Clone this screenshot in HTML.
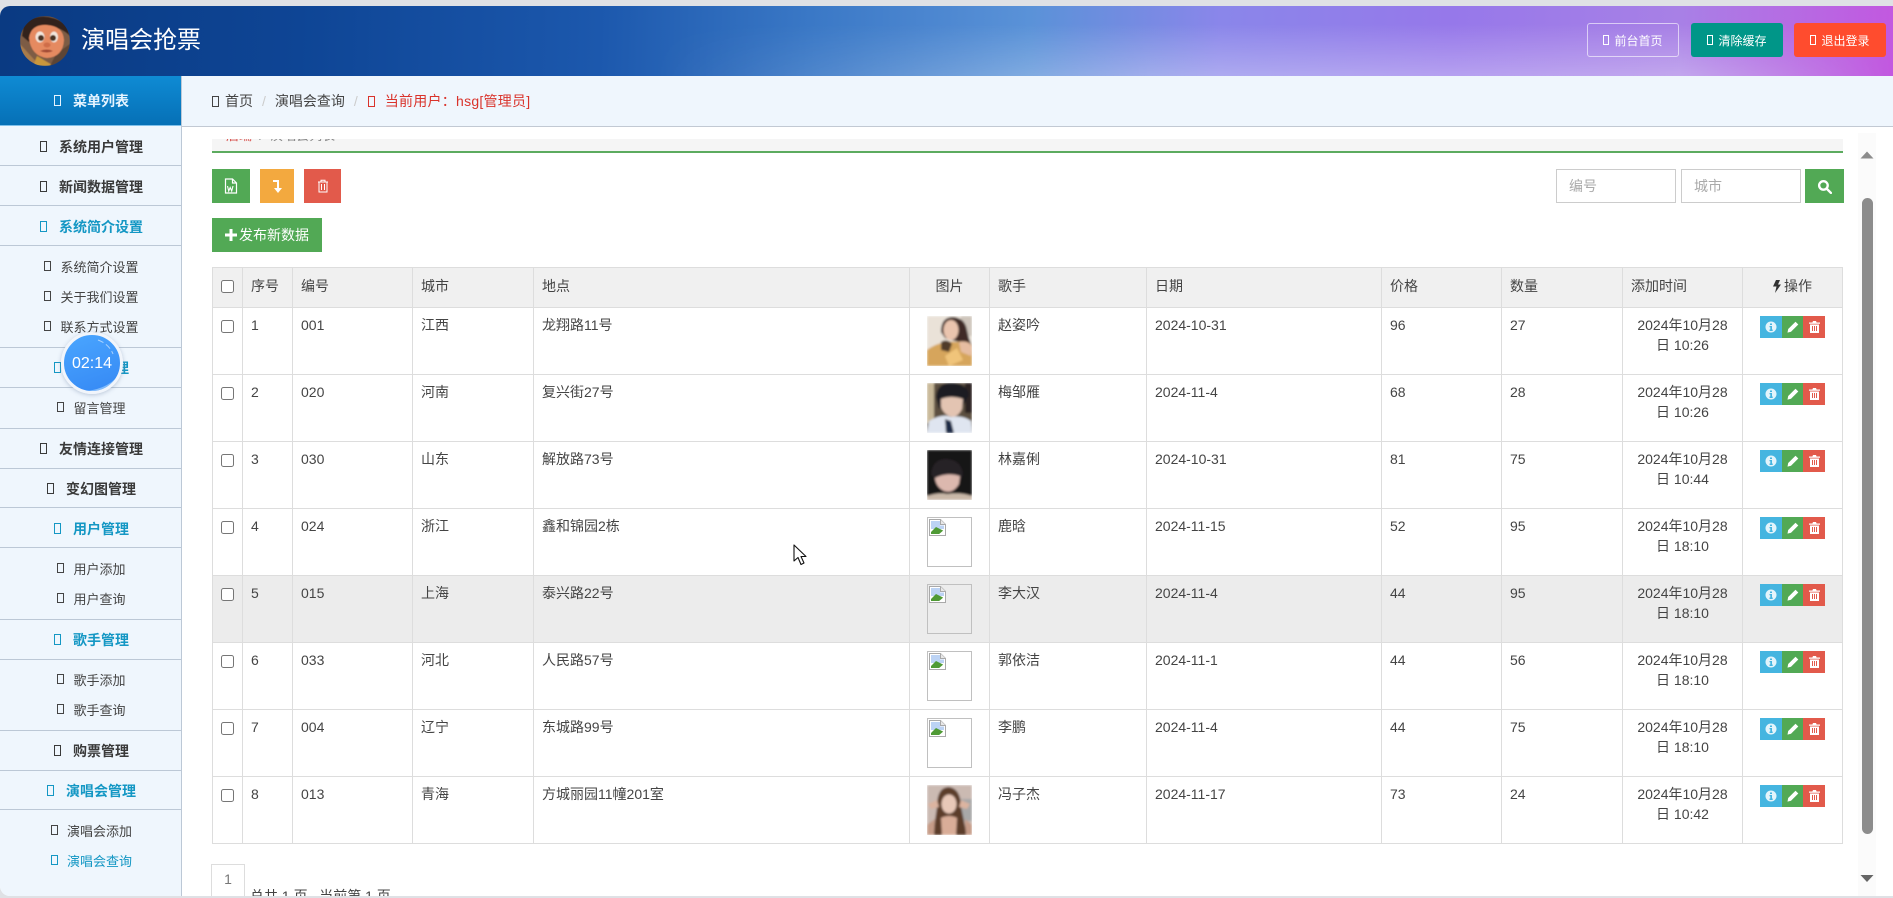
<!DOCTYPE html>
<html lang="zh">
<head>
<meta charset="utf-8">
<title>演唱会抢票</title>
<style>
*{box-sizing:border-box}
html,body{margin:0;padding:0;width:1893px;height:898px;overflow:hidden;background:#dfe1e5;font-family:"Liberation Sans","Noto Sans CJK SC",sans-serif;font-size:14px;color:#444}
.win{position:absolute;left:0;top:6px;width:1893px;height:890px;background:#fff;border-radius:10px 0 0 10px;overflow:hidden}
.hd{position:absolute;left:0;top:0;width:1893px;height:70px;background:linear-gradient(92deg,#0a3a82 0,#0e4595 300px,#1c58ad 600px,#3a78c6 810px,#5a92d8 1030px,#8a86ea 1220px,#9678ea 1450px,#a880e6 1680px,#c258e0 1893px)}
.hd:before{content:"";position:absolute;left:0;top:0;width:100%;height:100%;background:linear-gradient(180deg,rgba(255,255,255,0) 25%,rgba(255,255,255,.3) 100%);-webkit-mask-image:linear-gradient(90deg,transparent 650px,#000 1150px,#000 1680px,transparent 1893px);mask-image:linear-gradient(90deg,transparent 650px,#000 1150px,#000 1680px,transparent 1893px)}
.logo{position:absolute;left:20px;top:10px;width:50px;height:50px}
.ttl{position:absolute;left:81px;top:17px;font-size:24px;line-height:36px;color:#fff}
.tb{position:absolute;top:17px;height:34px;width:92px;border-radius:3px;color:#fff;font-size:12px;display:flex;align-items:center;justify-content:center}
.t{display:inline-block;width:7px;height:11px;border:1px solid currentColor;flex:none}
.tb .t{width:6px;height:10px;margin-right:5px}
.side{position:absolute;left:0;top:70px;width:182px;height:820px;background:#eff6fd;border-right:1px solid #bcc8d6}
.mh{position:absolute;left:0;top:0;width:181px;height:50px;background:linear-gradient(180deg,#0f8bd4,#0670b6);color:#e6f4ff;font-weight:bold;font-size:14px;display:flex;align-items:center;justify-content:center;border-bottom:1px solid #7fc0ea;padding-left:2px}
.mh .t{margin-right:12px;width:7px;height:11px}
.m,.s{position:absolute;left:0;width:181px;display:flex;align-items:center;justify-content:center;padding-left:2px}
.m{height:40px;border-bottom:1px solid #bcc8d6;font-weight:bold;font-size:14px;color:#3a3a3a;padding-top:2px}
.m.bt{border-top:1px solid #bcc8d6;height:41px;padding-top:0}
.m .t{margin-right:12px}
.s{height:30px;font-size:13px;color:#444}
.s .t{margin-right:9px;width:7px;height:10px}
.on{color:#1497c4}
.m.on{color:#1497c4}
.bar{position:absolute;left:182px;top:70px;width:1711px;height:51px;background:#eff6fd;border-bottom:1px solid #c2c9d3;display:flex;align-items:center;padding-left:30px;font-size:14px;color:#444}
.bar .t{margin-right:6px;width:7px;height:11px}
.bar i{font-style:normal;color:#ccc;margin:0 9px}
.red{color:#d9332b;display:flex;align-items:center;margin-left:1px;letter-spacing:.25px}
.red .t{margin-right:10px}
.main{position:absolute;left:182px;top:133px;width:1711px;height:757px;overflow:hidden}
.crumb{position:absolute;left:30px;top:-21px;width:1631px;height:35px;background:#f5f5f5;border-bottom:2px solid #5cab5f;padding:9px 14px;font-size:13px;line-height:18px;color:#888}
.crumb b{font-weight:normal;color:#d9534f}
.btn{position:absolute;color:#fff;display:flex;align-items:center;justify-content:center}
.g{background:#52a955}.o{background:#f3a93f}.r{background:#e25a4b}
.inp{position:absolute;top:30px;width:120px;height:34px;border:1px solid #ccc;background:#fff;padding-left:12px;line-height:32px;color:#aaa;font-size:14px}
table{position:absolute;left:30px;top:128px;width:1631px;table-layout:fixed;border-collapse:collapse;font-size:14px;color:#444}
th,td{border:1px solid #ddd;padding:8px;line-height:20px;text-align:left;vertical-align:top;font-weight:normal}
tbody td{padding-top:7px}
thead tr{height:40px;background:#f0f0f0}
tbody tr{height:67px}
tr.hv{background:#ececec}
input[type=checkbox]{display:block;width:13px;height:13px;margin:4px 0 0 0}
tbody input[type=checkbox]{margin-top:5px}
.c{text-align:center}
.pic{display:block;width:45px;height:50px;margin:1px auto 0}
.bk{width:45px;height:50px;margin:1px auto 0;border:1px solid #c0c0c0;padding:1px}
.bk svg{display:block}
.ops{display:flex;justify-content:center;margin-top:1px}
.ops span{height:22px;display:flex;align-items:center;justify-content:center}
.ib{background:#45b5e0;width:22px}.gb{background:#52a955;width:21px}.rb{background:#e25a4b;width:22px}
.pg{position:absolute;left:29px;top:725px;width:34px;height:40px;border:1px solid #ddd;background:#fff;text-align:center;line-height:28px;color:#777;font-size:14px}
.pt{position:absolute;left:68px;top:747px;font-size:14px;line-height:20px;color:#444;white-space:pre}
.sc{position:absolute;left:1858px;width:18px;background:#fbfbfb}
.th{position:absolute;left:1862px;width:11px;height:636px;border-radius:6px;background:#8c8c8c}
.timer{position:absolute;left:61px;top:332px;width:62px;height:62px;border-radius:50%;background:linear-gradient(160deg,#4aa6ff,#3588f4);border:3px solid #f1f5fb;box-shadow:0 1px 4px rgba(120,140,170,.45);color:#fff;text-align:center;line-height:58px;font-size:16px;overflow:hidden}
</style>
</head>
<body>
<div class="win">
  <div class="hd">
    <svg class="logo" viewBox="0 0 50 50">
      <defs><clipPath id="lc"><circle cx="25" cy="25" r="25"/></clipPath><filter id="lb"><feGaussianBlur stdDeviation=".5"/></filter></defs>
      <g clip-path="url(#lc)" filter="url(#lb)">
        <rect width="50" height="50" fill="#7d5c44"/>
        <path d="M0 28 L20 50 H0Z" fill="#a97c4c"/>
        <path d="M17 40 L34 50 H13Z" fill="#c9973e"/>
        <path d="M36 38L50 28V50H30Z" fill="#5d4434"/>
        <path d="M4 6 Q24 -6 46 8 L50 20 Q38 8 18 11 L9 26 L2 20Z" fill="#33231c"/>
        <path d="M9 22 Q11 8 27 9 Q43 10 44 24 Q43 41 27 42 Q11 40 9 22Z" fill="#e58a60"/>
        <ellipse cx="20" cy="21" rx="4.500" ry="5.500" fill="#f2e6dc"/>
        <ellipse cx="34" cy="21" rx="4" ry="5.500" fill="#f2e6dc"/>
        <circle cx="21" cy="22" r="3" fill="#4a3022"/>
        <circle cx="33" cy="22" r="3" fill="#4a3022"/>
        <ellipse cx="27" cy="29" rx="3.500" ry="2.500" fill="#cf6d48"/>
        <path d="M20 35 Q27 32 33 35 Q27 38 20 35Z" fill="#a04a34"/>
      </g>
    </svg>
    <div class="ttl">演唱会抢票</div>
    <div class="tb" style="left:1587px;border:1px solid rgba(255,255,255,.6)"><span class="t"></span>前台首页</div>
    <div class="tb" style="left:1691px;background:#009688"><span class="t"></span>清除缓存</div>
    <div class="tb" style="left:1794px;background:#ff4c2e"><span class="t"></span>退出登录</div>
  </div>

  <div class="side">
    <div class="mh"><span class="t"></span>菜单列表</div>
    <div class="m" style="top:50px"><span class="t"></span>系统用户管理</div>
    <div class="m" style="top:90px"><span class="t"></span>新闻数据管理</div>
    <div class="m on" style="top:130px"><span class="t"></span>系统简介设置</div>
    <div class="s" style="top:175px"><span class="t"></span>系统简介设置</div>
    <div class="s" style="top:205px"><span class="t"></span>关于我们设置</div>
    <div class="s" style="top:235px"><span class="t"></span>联系方式设置</div>
    <div class="m on bt" style="top:271px"><span class="t"></span>留言管理</div>
    <div class="s" style="top:316px"><span class="t"></span>留言管理</div>
    <div class="m bt" style="top:352px"><span class="t"></span>友情连接管理</div>
    <div class="m" style="top:392px"><span class="t"></span>变幻图管理</div>
    <div class="m on" style="top:432px"><span class="t"></span>用户管理</div>
    <div class="s" style="top:477px"><span class="t"></span>用户添加</div>
    <div class="s" style="top:507px"><span class="t"></span>用户查询</div>
    <div class="m on bt" style="top:543px"><span class="t"></span>歌手管理</div>
    <div class="s" style="top:588px"><span class="t"></span>歌手添加</div>
    <div class="s" style="top:618px"><span class="t"></span>歌手查询</div>
    <div class="m bt" style="top:654px"><span class="t"></span>购票管理</div>
    <div class="m on" style="top:694px"><span class="t"></span>演唱会管理</div>
    <div class="s" style="top:739px"><span class="t"></span>演唱会添加</div>
    <div class="s on" style="top:769px"><span class="t"></span>演唱会查询</div>
  </div>

  <div class="bar">
    <span class="t"></span>首页<i>/</i>演唱会查询<i>/</i><span class="red"><span class="t"></span>当前用户：hsg[管理员]</span>
  </div>

  <div class="main">
    <div class="crumb"><b>后端</b> &nbsp;/&nbsp; 演唱会列表</div>

    <div class="btn g" style="left:30px;top:30px;width:38px;height:34px">
      <svg width="14" height="16" viewBox="0 0 14 16" fill="none" stroke="#fff" stroke-width="1.2"><path d="M1.500 1h7l4 4v10h-11z"/><path d="M8.500 1v4h4"/><path d="M3.500 8l1.200 5 1.500-3.500 1.500 3.500 1.300-5" stroke-width="1.100"/></svg>
    </div>
    <div class="btn o" style="left:78px;top:30px;width:34px;height:34px">
      <svg width="12" height="15" viewBox="0 0 12 15" fill="#fff"><path d="M2 1h6v8h3l-4 5-4-5h3V3H2z"/></svg>
    </div>
    <div class="btn r" style="left:122px;top:30px;width:37px;height:34px">
      <svg width="12" height="14" viewBox="0 0 12 14" fill="none" stroke="#fff" stroke-width="1"><path d="M1 3h10M4 3V1.200h4V3M2 3v10h8V3M4.500 5v6M7.500 5v6"/></svg>
    </div>
    <div class="btn g" style="left:30px;top:79px;width:110px;height:34px;font-size:14px">
      <svg width="12" height="12" viewBox="0 0 12 12" fill="#fff" style="margin-right:2px"><path d="M4.500 0h3v4.500H12v3H7.500V12h-3V7.500H0v-3h4.500z"/></svg>发布新数据
    </div>

    <div class="inp" style="left:1374px">编号</div>
    <div class="inp" style="left:1499px">城市</div>
    <div class="btn g" style="left:1623px;top:30px;width:39px;height:34px">
      <svg width="15" height="15" viewBox="0 0 14 14" fill="none" stroke="#fff" stroke-width="2.200"><circle cx="6" cy="6" r="4"/><path d="M9 9l4 4" stroke-linecap="round"/></svg>
    </div>

    <table>
      <colgroup><col style="width:30px"><col style="width:50px"><col style="width:120px"><col style="width:121px"><col style="width:376px"><col style="width:80px"><col style="width:157px"><col style="width:235px"><col style="width:120px"><col style="width:121px"><col style="width:120px"><col style="width:100px"></colgroup>
      <thead>
        <tr><th><input type="checkbox"></th><th>序号</th><th>编号</th><th>城市</th><th>地点</th><th class="c">图片</th><th>歌手</th><th>日期</th><th>价格</th><th>数量</th><th>添加时间</th>
        <th class="c"><svg width="8" height="13" viewBox="0 0 8 13" fill="#333" style="vertical-align:-2px;margin-right:3px"><path d="M3 0h4L5 4.500h3L2 13l1.500-6.500H0z"/></svg>操作</th></tr>
      </thead>
      <tbody>
        <tr><td><input type="checkbox"></td><td>1</td><td>001</td><td>江西</td><td>龙翔路11号</td>
          <td><svg class="pic" viewBox="0 0 45 50"><defs><filter id="b1"><feGaussianBlur stdDeviation="1"/></filter></defs><g filter="url(#b1)"><rect width="45" height="50" fill="#eae2d8"/><rect x="34" width="11" height="20" fill="#cfc6bc"/><path d="M14 16Q14 1 26 1Q38 2 40 14Q42 24 45 30L32 26 18 22Z" fill="#3f2c28"/><ellipse cx="24" cy="14" rx="7.500" ry="10" fill="#eac4ae"/><path d="M0 50V34Q14 24 30 26Q42 24 45 30V50Z" fill="#d6a55c"/><path d="M32 26Q42 24 45 31L44 40 34 36Z" fill="#e6bda2"/><path d="M14 26Q20 22 25 28L22 36 14 34Z" fill="#4f3a2c"/><path d="M18 40L30 32 36 44 22 50Z" fill="#f0c47a"/></g></svg></td>
          <td>赵姿吟</td><td>2024-10-31</td><td>96</td><td>27</td><td class="c">2024年10月28日 10:26</td><td><div class="ops"><span class="ib"><svg width="12" height="12" viewBox="0 0 12 12"><circle cx="6" cy="6" r="5.500" fill="#fff" opacity=".85"/><path d="M5 2.500h2v1.500H5zM4.500 5h2.500v3.500h.7V10H4.500V8.500h.8V6.300h-.8z" fill="#45b5e0"/></svg></span><span class="gb"><svg width="12" height="12" viewBox="0 0 12 12" fill="#fff"><path d="M8.500.7l2.800 2.800L4 10.800l-3.500.8.700-3.600z"/></svg></span><span class="rb"><svg width="11" height="12" viewBox="0 0 11 12" fill="#fff"><path d="M4 0h3l.6 1.500H11v1.300H0V1.500h3.400zM1 3.500h9V12H1zm2 1.500v5h1V5zm2 0v5h1V5zm2 0v5h1V5z" fill-rule="evenodd"/></svg></span></div></td></tr>

        <tr><td><input type="checkbox"></td><td>2</td><td>020</td><td>河南</td><td>复兴街27号</td>
          <td><svg class="pic" viewBox="0 0 45 50"><g filter="url(#b1)"><rect width="45" height="50" fill="#5c5040"/><rect x="0" width="7" height="40" fill="#c9b99a"/><rect x="38" width="7" height="30" fill="#2a2420"/><path d="M9 14Q10 0 24 0Q40 0 42 12L36 22 30 26 18 22 12 26Z" fill="#1c1a20"/><path d="M14 16Q24 12 36 16L35 26Q31 34 25 34Q17 32 14 24Z" fill="#e3c4b2"/><path d="M0 50L2 38Q16 30 24 34Q36 32 44 38L45 50Z" fill="#dfe5f0"/><path d="M18 36L24 38 27 50H19Z" fill="#1b2c46"/></g></svg></td>
          <td>梅邹雁</td><td>2024-11-4</td><td>68</td><td>28</td><td class="c">2024年10月28日 10:26</td><td><div class="ops"><span class="ib"><svg width="12" height="12" viewBox="0 0 12 12"><circle cx="6" cy="6" r="5.500" fill="#fff" opacity=".85"/><path d="M5 2.500h2v1.500H5zM4.500 5h2.500v3.500h.7V10H4.500V8.500h.8V6.300h-.8z" fill="#45b5e0"/></svg></span><span class="gb"><svg width="12" height="12" viewBox="0 0 12 12" fill="#fff"><path d="M8.500.7l2.800 2.800L4 10.800l-3.500.8.700-3.600z"/></svg></span><span class="rb"><svg width="11" height="12" viewBox="0 0 11 12" fill="#fff"><path d="M4 0h3l.6 1.500H11v1.300H0V1.500h3.400zM1 3.500h9V12H1zm2 1.500v5h1V5zm2 0v5h1V5zm2 0v5h1V5z" fill-rule="evenodd"/></svg></span></div></td></tr>

        <tr><td><input type="checkbox"></td><td>3</td><td>030</td><td>山东</td><td>解放路73号</td>
          <td><svg class="pic" viewBox="0 0 45 50"><g filter="url(#b1)"><rect width="45" height="50" fill="#191313"/><path d="M4 24Q6 8 20 9Q34 10 36 24L34 30 8 30Z" fill="#262026"/><path d="M8 28Q20 22 33 26L32 34Q26 44 17 41Q9 37 8 28Z" fill="#dcb8ae"/><path d="M6 28Q14 20 33 26 30 18 20 17 8 18 6 28Z" fill="#262026"/><path d="M0 50V46Q12 42 20 44Q34 42 45 46V50Z" fill="#c9b8a8"/></g></svg></td>
          <td>林嘉俐</td><td>2024-10-31</td><td>81</td><td>75</td><td class="c">2024年10月28日 10:44</td><td><div class="ops"><span class="ib"><svg width="12" height="12" viewBox="0 0 12 12"><circle cx="6" cy="6" r="5.500" fill="#fff" opacity=".85"/><path d="M5 2.500h2v1.500H5zM4.500 5h2.500v3.500h.7V10H4.500V8.500h.8V6.300h-.8z" fill="#45b5e0"/></svg></span><span class="gb"><svg width="12" height="12" viewBox="0 0 12 12" fill="#fff"><path d="M8.500.7l2.800 2.800L4 10.800l-3.500.8.700-3.600z"/></svg></span><span class="rb"><svg width="11" height="12" viewBox="0 0 11 12" fill="#fff"><path d="M4 0h3l.6 1.500H11v1.300H0V1.500h3.400zM1 3.500h9V12H1zm2 1.500v5h1V5zm2 0v5h1V5zm2 0v5h1V5z" fill-rule="evenodd"/></svg></span></div></td></tr>

        <tr><td><input type="checkbox"></td><td>4</td><td>024</td><td>浙江</td><td>鑫和锦园2栋</td>
          <td><div class="bk"><svg width="17" height="17" viewBox="0 0 17 17"><path d="M.5.5h11l5 5v11H.5z" fill="#fff" stroke="#a9a9a9"/><path d="M11.500.5v5h5" fill="#e8e8e8" stroke="#a9a9a9"/><path d="M2 2h9v4.500h4V10H2z" fill="#bcd3f4"/><path d="M2 15V13L7 8l4 2 4 2-2 3z" fill="#4f9a35"/><path d="M9 16l7-6v3l-4 3z" fill="#fff"/></svg></div></td>
          <td>鹿晗</td><td>2024-11-15</td><td>52</td><td>95</td><td class="c">2024年10月28日 18:10</td><td><div class="ops"><span class="ib"><svg width="12" height="12" viewBox="0 0 12 12"><circle cx="6" cy="6" r="5.500" fill="#fff" opacity=".85"/><path d="M5 2.500h2v1.500H5zM4.500 5h2.500v3.500h.7V10H4.500V8.500h.8V6.300h-.8z" fill="#45b5e0"/></svg></span><span class="gb"><svg width="12" height="12" viewBox="0 0 12 12" fill="#fff"><path d="M8.500.7l2.800 2.800L4 10.800l-3.500.8.700-3.600z"/></svg></span><span class="rb"><svg width="11" height="12" viewBox="0 0 11 12" fill="#fff"><path d="M4 0h3l.6 1.500H11v1.300H0V1.500h3.400zM1 3.500h9V12H1zm2 1.500v5h1V5zm2 0v5h1V5zm2 0v5h1V5z" fill-rule="evenodd"/></svg></span></div></td></tr>

        <tr class="hv"><td><input type="checkbox"></td><td>5</td><td>015</td><td>上海</td><td>泰兴路22号</td>
          <td><div class="bk"><svg width="17" height="17" viewBox="0 0 17 17"><path d="M.5.5h11l5 5v11H.5z" fill="#fff" stroke="#a9a9a9"/><path d="M11.500.5v5h5" fill="#e8e8e8" stroke="#a9a9a9"/><path d="M2 2h9v4.500h4V10H2z" fill="#bcd3f4"/><path d="M2 15V13L7 8l4 2 4 2-2 3z" fill="#4f9a35"/><path d="M9 16l7-6v3l-4 3z" fill="#fff"/></svg></div></td>
          <td>李大汉</td><td>2024-11-4</td><td>44</td><td>95</td><td class="c">2024年10月28日 18:10</td><td><div class="ops"><span class="ib"><svg width="12" height="12" viewBox="0 0 12 12"><circle cx="6" cy="6" r="5.500" fill="#fff" opacity=".85"/><path d="M5 2.500h2v1.500H5zM4.500 5h2.500v3.500h.7V10H4.500V8.500h.8V6.300h-.8z" fill="#45b5e0"/></svg></span><span class="gb"><svg width="12" height="12" viewBox="0 0 12 12" fill="#fff"><path d="M8.500.7l2.800 2.800L4 10.800l-3.500.8.700-3.600z"/></svg></span><span class="rb"><svg width="11" height="12" viewBox="0 0 11 12" fill="#fff"><path d="M4 0h3l.6 1.500H11v1.300H0V1.500h3.400zM1 3.500h9V12H1zm2 1.500v5h1V5zm2 0v5h1V5zm2 0v5h1V5z" fill-rule="evenodd"/></svg></span></div></td></tr>

        <tr><td><input type="checkbox"></td><td>6</td><td>033</td><td>河北</td><td>人民路57号</td>
          <td><div class="bk"><svg width="17" height="17" viewBox="0 0 17 17"><path d="M.5.5h11l5 5v11H.5z" fill="#fff" stroke="#a9a9a9"/><path d="M11.500.5v5h5" fill="#e8e8e8" stroke="#a9a9a9"/><path d="M2 2h9v4.500h4V10H2z" fill="#bcd3f4"/><path d="M2 15V13L7 8l4 2 4 2-2 3z" fill="#4f9a35"/><path d="M9 16l7-6v3l-4 3z" fill="#fff"/></svg></div></td>
          <td>郭依洁</td><td>2024-11-1</td><td>44</td><td>56</td><td class="c">2024年10月28日 18:10</td><td><div class="ops"><span class="ib"><svg width="12" height="12" viewBox="0 0 12 12"><circle cx="6" cy="6" r="5.500" fill="#fff" opacity=".85"/><path d="M5 2.500h2v1.500H5zM4.500 5h2.500v3.500h.7V10H4.500V8.500h.8V6.300h-.8z" fill="#45b5e0"/></svg></span><span class="gb"><svg width="12" height="12" viewBox="0 0 12 12" fill="#fff"><path d="M8.500.7l2.800 2.800L4 10.800l-3.500.8.700-3.600z"/></svg></span><span class="rb"><svg width="11" height="12" viewBox="0 0 11 12" fill="#fff"><path d="M4 0h3l.6 1.500H11v1.300H0V1.500h3.400zM1 3.500h9V12H1zm2 1.500v5h1V5zm2 0v5h1V5zm2 0v5h1V5z" fill-rule="evenodd"/></svg></span></div></td></tr>

        <tr><td><input type="checkbox"></td><td>7</td><td>004</td><td>辽宁</td><td>东城路99号</td>
          <td><div class="bk"><svg width="17" height="17" viewBox="0 0 17 17"><path d="M.5.5h11l5 5v11H.5z" fill="#fff" stroke="#a9a9a9"/><path d="M11.500.5v5h5" fill="#e8e8e8" stroke="#a9a9a9"/><path d="M2 2h9v4.500h4V10H2z" fill="#bcd3f4"/><path d="M2 15V13L7 8l4 2 4 2-2 3z" fill="#4f9a35"/><path d="M9 16l7-6v3l-4 3z" fill="#fff"/></svg></div></td>
          <td>李鹏</td><td>2024-11-4</td><td>44</td><td>75</td><td class="c">2024年10月28日 18:10</td><td><div class="ops"><span class="ib"><svg width="12" height="12" viewBox="0 0 12 12"><circle cx="6" cy="6" r="5.500" fill="#fff" opacity=".85"/><path d="M5 2.500h2v1.500H5zM4.500 5h2.500v3.500h.7V10H4.500V8.500h.8V6.300h-.8z" fill="#45b5e0"/></svg></span><span class="gb"><svg width="12" height="12" viewBox="0 0 12 12" fill="#fff"><path d="M8.500.7l2.800 2.800L4 10.800l-3.500.8.700-3.600z"/></svg></span><span class="rb"><svg width="11" height="12" viewBox="0 0 11 12" fill="#fff"><path d="M4 0h3l.6 1.500H11v1.300H0V1.500h3.400zM1 3.500h9V12H1zm2 1.500v5h1V5zm2 0v5h1V5zm2 0v5h1V5z" fill-rule="evenodd"/></svg></span></div></td></tr>

        <tr><td><input type="checkbox"></td><td>8</td><td>013</td><td>青海</td><td>方城丽园11幢201室</td>
          <td><svg class="pic" viewBox="0 0 45 50"><g filter="url(#b1)"><rect width="45" height="50" fill="#cbbab2"/><rect x="32" y="14" width="13" height="22" fill="#a8a8a8"/><path d="M10 22Q10 2 22 2Q34 4 34 22L40 50H6Z" fill="#5c3c2c"/><ellipse cx="22" cy="19" rx="7.500" ry="9.500" fill="#e8c8b8"/><path d="M1 19L10 15 12 22 4 24ZM43 19L34 15 32 22 40 24Z" fill="#dcb4a0"/><path d="M14 33Q22 29 30 33L29 50H15Z" fill="#d9ad98"/><path d="M0 50V40L8 34 7 50ZM45 50V40L38 34 39 50Z" fill="#c69c88"/></g></svg></td>
          <td>冯子杰</td><td>2024-11-17</td><td>73</td><td>24</td><td class="c">2024年10月28日 10:42</td><td><div class="ops"><span class="ib"><svg width="12" height="12" viewBox="0 0 12 12"><circle cx="6" cy="6" r="5.500" fill="#fff" opacity=".85"/><path d="M5 2.500h2v1.500H5zM4.500 5h2.500v3.500h.7V10H4.500V8.500h.8V6.300h-.8z" fill="#45b5e0"/></svg></span><span class="gb"><svg width="12" height="12" viewBox="0 0 12 12" fill="#fff"><path d="M8.500.7l2.800 2.800L4 10.800l-3.500.8.700-3.600z"/></svg></span><span class="rb"><svg width="11" height="12" viewBox="0 0 11 12" fill="#fff"><path d="M4 0h3l.6 1.500H11v1.300H0V1.500h3.400zM1 3.500h9V12H1zm2 1.500v5h1V5zm2 0v5h1V5zm2 0v5h1V5z" fill-rule="evenodd"/></svg></span></div></td></tr>
      </tbody>
    </table>

    <div class="pg">1</div>
    <div class="pt">总共 1 页   当前第 1 页</div>
  </div>

  <div class="sc" style="top:127px;height:763px">
    <svg width="18" height="763" style="display:block">
      <path d="M2.500 25.500L9 18.500l6.500 7z" fill="#8c8c8c"/>
      <path d="M2.500 742h13l-6.500 7z" fill="#666"/>
    </svg>
  </div>
  <div class="th" style="top:192px"></div>
</div>

<div class="timer">02:14
  <svg width="56" height="56" viewBox="0 0 56 56" style="position:absolute;left:0;top:0">
    <path d="M34 5Q45 9 49 19" fill="none" stroke="#fff" stroke-width="1" opacity=".55" stroke-dasharray="6 3"/>
    <path d="M22 56Q42 54 53 42L56 56Z" fill="#a9d6ff" opacity=".65"/>
  </svg>
</div>

<svg width="14" height="22" viewBox="0 0 14 22" style="position:absolute;left:793px;top:544px">
  <path d="M1 1V17L5 13.500 8 20.500 11 19 8 12.500H13Z" fill="#fff" stroke="#111" stroke-width="1.100" stroke-linejoin="round"/>
</svg>
</body>
</html>
